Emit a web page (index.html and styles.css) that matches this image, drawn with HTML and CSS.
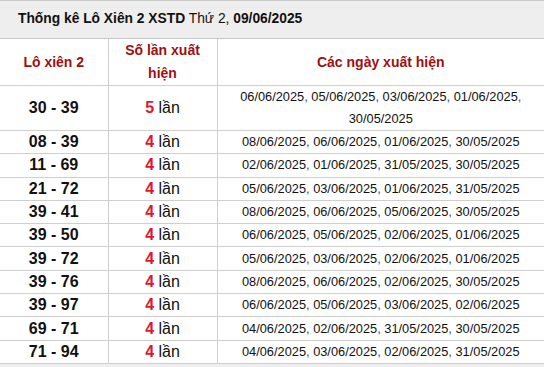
FILE: index.html
```html
<!DOCTYPE html>
<html lang="vi">
<head>
<meta charset="utf-8">
<title>Thống kê Lô Xiên 2 XSTD</title>
<link rel="stylesheet" href="styles.css">
</head>
<body>
<div class="box">
  <div class="title"><b>Thống kê Lô Xiên 2 XSTD</b> <span class="date">Thứ 2, <b>09/06/2025</b></span></div>
  <table class="stat">
    <colgroup><col class="c1"><col class="c2"><col class="c3"></colgroup>
    <thead>
      <tr><th>Lô xiên 2</th><th>Số lần xuất hiện</th><th>Các ngày xuất hiện</th></tr>
    </thead>
    <tbody>
      <tr><td class="pair">30 - 39</td><td class="cnt"><b>5</b> lần</td><td class="days">06/06/2025<i>,</i> 05/06/2025<i>,</i> 03/06/2025<i>,</i> 01/06/2025<i>,</i> 30/05/2025</td></tr>
      <tr><td class="pair">08 - 39</td><td class="cnt"><b>4</b> lần</td><td class="days">08/06/2025<i>,</i> 06/06/2025<i>,</i> 01/06/2025<i>,</i> 30/05/2025</td></tr>
      <tr><td class="pair">11 - 69</td><td class="cnt"><b>4</b> lần</td><td class="days">02/06/2025<i>,</i> 01/06/2025<i>,</i> 31/05/2025<i>,</i> 30/05/2025</td></tr>
      <tr><td class="pair">21 - 72</td><td class="cnt"><b>4</b> lần</td><td class="days">05/06/2025<i>,</i> 03/06/2025<i>,</i> 01/06/2025<i>,</i> 31/05/2025</td></tr>
      <tr><td class="pair">39 - 41</td><td class="cnt"><b>4</b> lần</td><td class="days">08/06/2025<i>,</i> 06/06/2025<i>,</i> 05/06/2025<i>,</i> 30/05/2025</td></tr>
      <tr><td class="pair">39 - 50</td><td class="cnt"><b>4</b> lần</td><td class="days">06/06/2025<i>,</i> 05/06/2025<i>,</i> 02/06/2025<i>,</i> 01/06/2025</td></tr>
      <tr><td class="pair">39 - 72</td><td class="cnt"><b>4</b> lần</td><td class="days">05/06/2025<i>,</i> 03/06/2025<i>,</i> 02/06/2025<i>,</i> 01/06/2025</td></tr>
      <tr><td class="pair">39 - 76</td><td class="cnt"><b>4</b> lần</td><td class="days">08/06/2025<i>,</i> 06/06/2025<i>,</i> 02/06/2025<i>,</i> 30/05/2025</td></tr>
      <tr><td class="pair">39 - 97</td><td class="cnt"><b>4</b> lần</td><td class="days">06/06/2025<i>,</i> 05/06/2025<i>,</i> 03/06/2025<i>,</i> 02/06/2025</td></tr>
      <tr><td class="pair">69 - 71</td><td class="cnt"><b>4</b> lần</td><td class="days">04/06/2025<i>,</i> 02/06/2025<i>,</i> 31/05/2025<i>,</i> 30/05/2025</td></tr>
      <tr><td class="pair">71 - 94</td><td class="cnt"><b>4</b> lần</td><td class="days">04/06/2025<i>,</i> 03/06/2025<i>,</i> 02/06/2025<i>,</i> 31/05/2025</td></tr>
    </tbody>
  </table>
  <div class="foot"></div>
</div>
</body>
</html>
```
FILE: styles.css
```css
html, body {
  margin: 0;
  padding: 0;
  background: #fff;
}
body {
  font-family: "Liberation Sans", Arial, sans-serif;
  color: #111;
}
.box {
  width: 544px;
}
.title {
  background: #efeeee;
  border-top: 1px solid #c8c8c8;
  border-bottom: 1px solid #c8c8c8;
  height: 37px;
  line-height: 36px;
  padding-left: 18px;
  font-size: 13.8px;
  color: #111;
  white-space: nowrap;
}
.title b { font-weight: bold; }
.title .date { font-weight: normal; }
.stat {
  width: 544px;
  border-collapse: collapse;
  table-layout: fixed;
}
.c1 { width: 108px; }
.c2 { width: 109px; }
.stat th, .stat td {
  border: 1px solid #cfcfcf;
  text-align: center;
  vertical-align: middle;
  padding: 0 6px;
}
.stat tr > :first-child { border-left: 0; }
.stat tr > :last-child { border-right: 0; }
.stat thead tr > * { border-top: 0; }
.stat th {
  height: 45px;
  font-size: 14px;
  line-height: 23px;
  color: #9e1010;
  font-weight: bold;
  padding: 0 16px;
}
.stat td {
  height: 22.3px;
  line-height: 22px;
}
.pair {
  font-size: 16px;
  font-weight: bold;
}
.cnt {
  font-size: 16px;
}
.cnt b {
  color: #e3152b;
}
.days {
  font-size: 12.8px;
  line-height: 23px;
  padding: 0 10px;
}
.days i {
  font-style: normal;
  color: #3c3f9c;
}
.foot {
  height: 5px;
  background: #efeeee;
}
```
